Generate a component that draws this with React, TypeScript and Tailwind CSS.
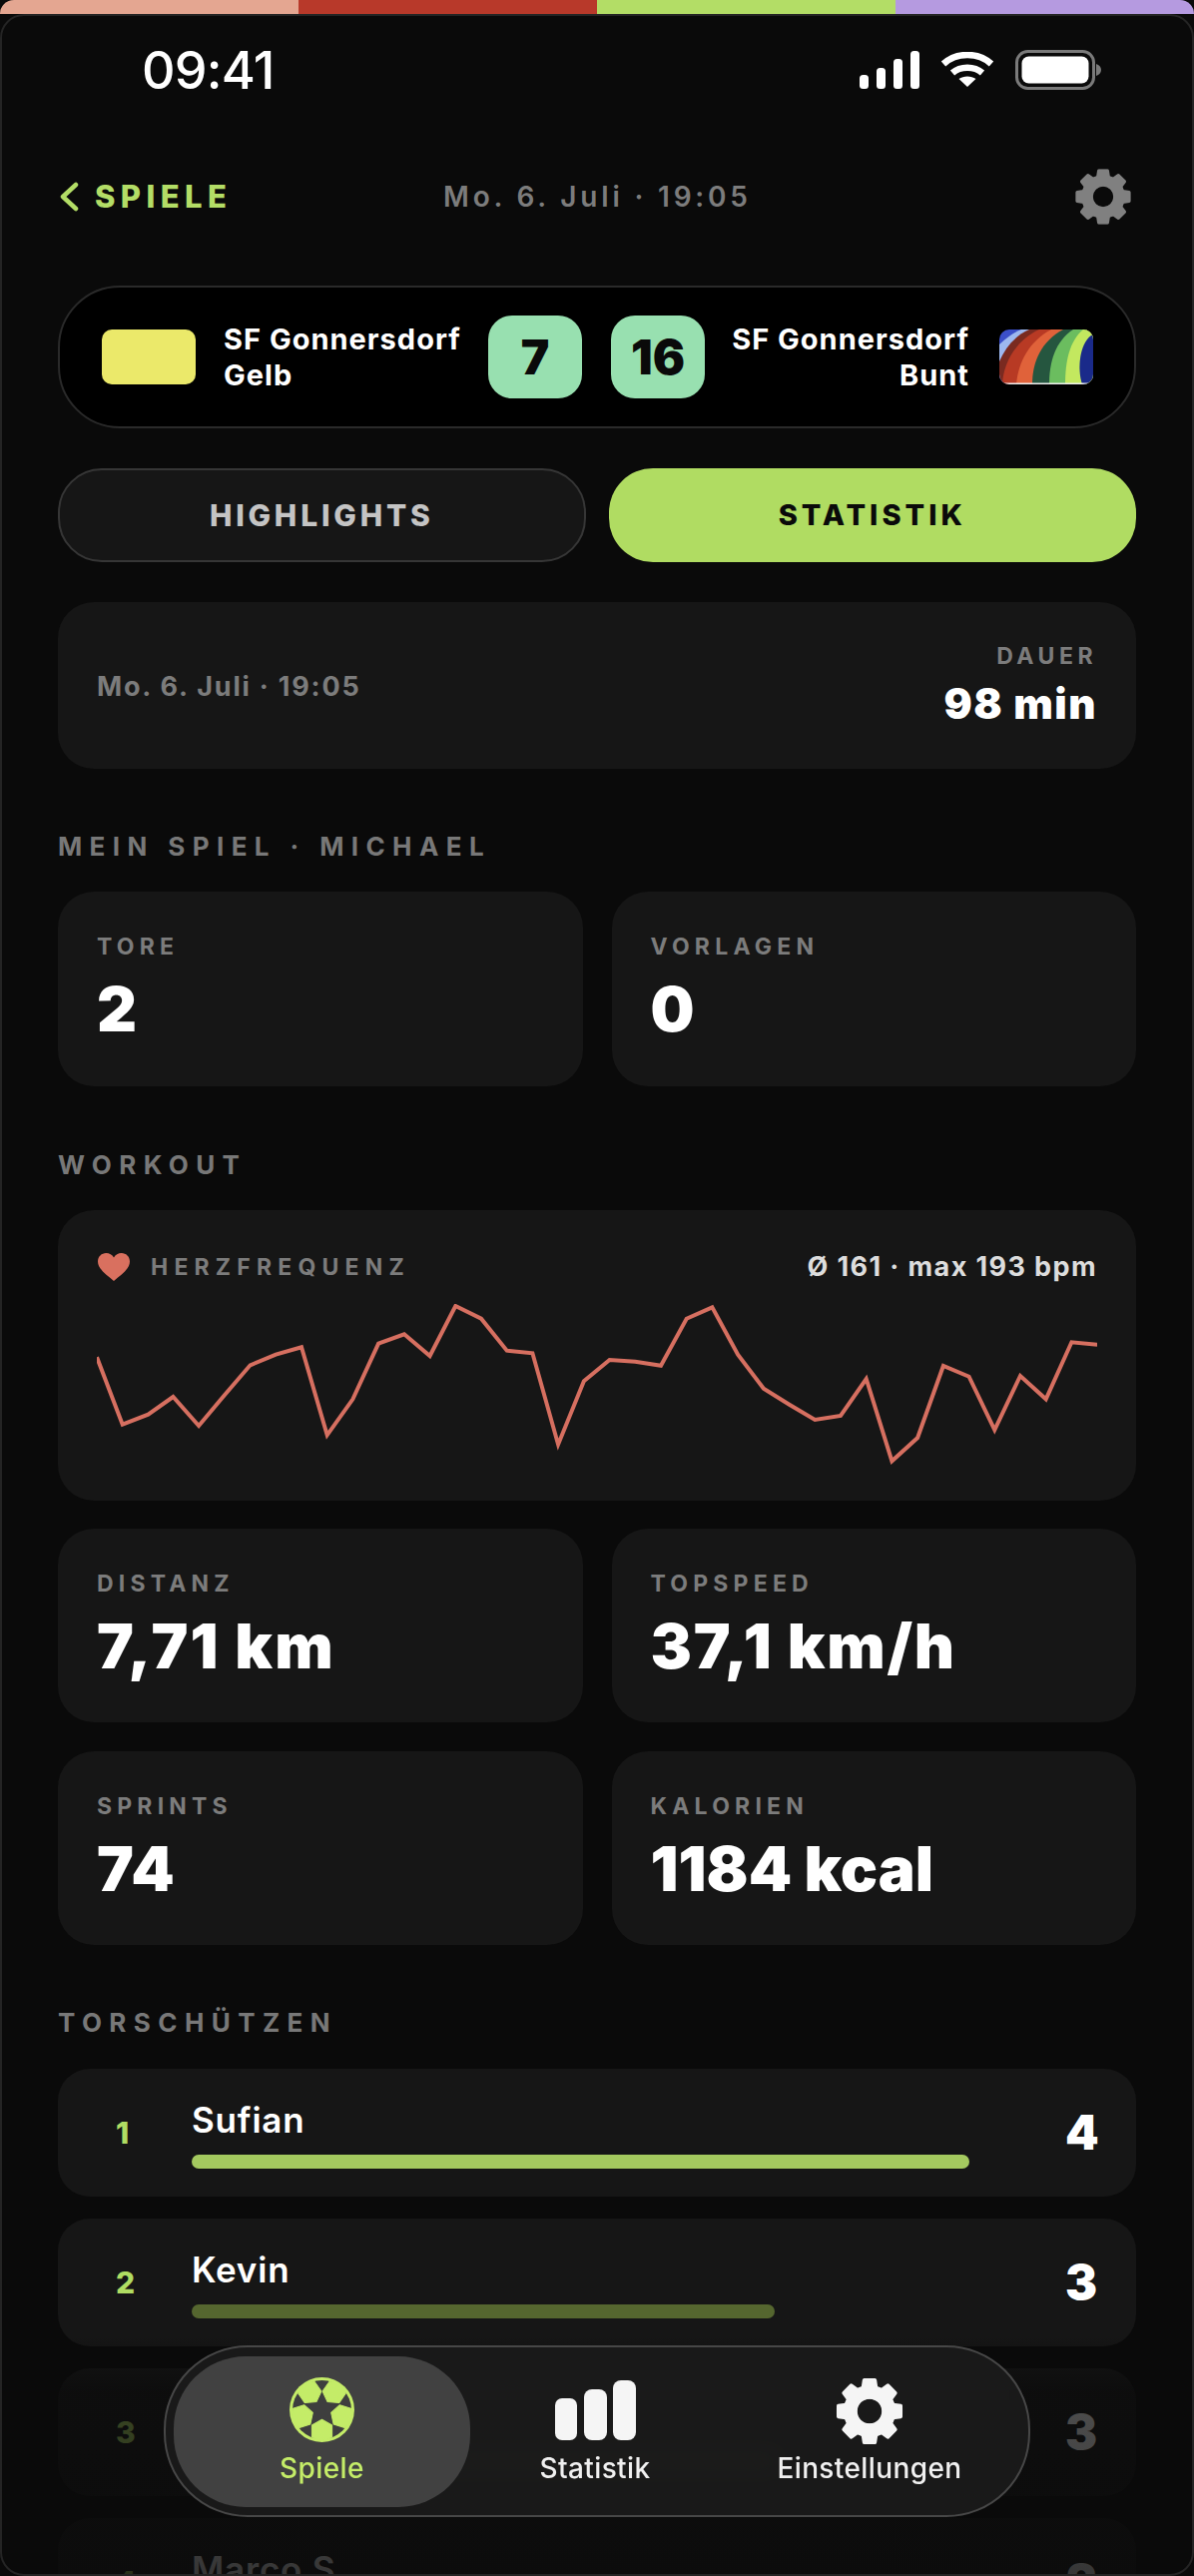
import React from "react";

const font = { fontFamily: "Inter, 'Noto Sans', sans-serif" };

function gearPath(outer: number, body: number, hole: number) {
  const c = 50;
  const teeth = 8;
  const pts: string[] = [];
  for (let i = 0; i < teeth; i++) {
    const a = (i * 2 * Math.PI) / teeth - Math.PI / 2;
    const w1 = 0.27;
    const w2 = 0.17;
    const p = (r: number, d: number) =>
      `${(c + r * Math.cos(a + d)).toFixed(2)} ${(c + r * Math.sin(a + d)).toFixed(2)}`;
    pts.push(p(body, -w1), p(outer, -w2), p(outer, w2), p(body, w1));
  }
  const ring = "M" + pts.join("L") + "Z";
  const h = `M${c - hole} ${c}a${hole} ${hole} 0 1 0 ${hole * 2} 0a${hole} ${hole} 0 1 0 ${-hole * 2} 0Z`;
  return ring + h;
}

function Gear({ className, color }: { className: string; color: string }) {
  return (
    <svg viewBox="0 0 100 100" className={className}>
      <path d={gearPath(46, 36, 17)} fill={color} fillRule="evenodd" />
      <path d={gearPath(44, 34, 20)} fill={color} fillRule="evenodd" stroke={color} strokeWidth="5" strokeLinejoin="round" />
    </svg>
  );
}

function hex(cx: number, cy: number, r: number, rot: number) {
  return Array.from({ length: 6 }, (_, i) => {
    const a = rot + (i * Math.PI) / 3;
    return `${(cx + r * Math.cos(a)).toFixed(2)},${(cy + r * Math.sin(a)).toFixed(2)}`;
  }).join(" ");
}

function Ball() {
  const angles = [-125, -55, 18, 90, 162];
  return (
    <svg viewBox="0 0 64 64" className="h-[65px] w-[65px]">
      <defs>
        <clipPath id="ballclip">
          <circle cx="32" cy="32" r="30" />
        </clipPath>
      </defs>
      <circle cx="32" cy="32" r="32" fill="#c4ec68" />
      <circle cx="32" cy="32" r="29" fill="#3e3e3e" />
      <g clipPath="url(#ballclip)" fill="#c4ec68">
        {angles.map((d) => {
          const a = (d * Math.PI) / 180;
          return (
            <polygon key={d} points={hex(32 + 21 * Math.cos(a), 32 + 21 * Math.sin(a), 11.5, a + Math.PI)} strokeLinejoin="round" stroke="#c4ec68" strokeWidth="1" />
          );
        })}
      </g>
    </svg>
  );
}

function Flag() {
  return (
    <svg viewBox="0 0 94 55" className="h-[55px] w-[94px] rounded-[10px]">
      <rect width="94" height="55" fill="#3b4fc9" />
      <path d="M0 15C8 8 14 3 22 0L94 0L94 55L0 55Z" fill="#9db8f0" />
      <path d="M0 32C6 18 16 6 30 0L94 0L94 55L0 55Z" fill="#7a2a20" />
      <path d="M3 55C4 32 18 10 40 0L94 0L94 55Z" fill="#b83a24" />
      <path d="M17 55C19 32 30 12 52 0L94 0L94 55Z" fill="#e0623a" />
      <path d="M33 55C33 32 42 12 64 0L94 0L94 55Z" fill="#25563f" />
      <path d="M50 55C50 32 56 12 74 0L94 0L94 55Z" fill="#6bbd5f" />
      <path d="M66 55C66 32 70 12 84 0L94 0L94 55Z" fill="#c3e85f" />
      <path d="M83 55C78 40 80 15 92 6L94 6L94 55Z" fill="#1a2a8a" />
      <rect y="53.5" width="94" height="1.5" fill="#eeeeee" />
    </svg>
  );
}

function Signal() {
  return (
    <svg viewBox="0 0 60 38" className="h-[38px] w-[60px]">
      <rect x="0" y="24" width="9" height="14" rx="3.5" fill="#fff" />
      <rect x="17" y="17" width="9" height="21" rx="3.5" fill="#fff" />
      <rect x="34" y="8" width="9" height="30" rx="3.5" fill="#fff" />
      <rect x="51" y="0" width="9" height="38" rx="3.5" fill="#fff" />
    </svg>
  );
}

function Wifi() {
  return (
    <svg viewBox="0 0 54 36" className="h-[36px] w-[54px]" fill="none" stroke="#fff" strokeWidth="6.5">
      <path d="M3 12C16 0 38 0 51 12" />
      <path d="M12 21C20 14 34 14 42 21" />
      <path d="M27 35L18.5 27C23 23.5 31 23.5 35.5 27Z" fill="#fff" stroke="none" />
    </svg>
  );
}

function Battery() {
  return (
    <svg viewBox="0 0 86 40" className="h-[40px] w-[86px]">
      <rect x="1.5" y="1.5" width="77" height="37" rx="11" fill="none" stroke="#7a7a7a" strokeWidth="3" />
      <rect x="6.5" y="6.5" width="67" height="27" rx="7" fill="#fff" />
      <path d="M81 14C84 15 86 17 86 20C86 23 84 25 81 26Z" fill="#7a7a7a" />
    </svg>
  );
}

const Heart = () => (
  <svg viewBox="0 0 32 28" className="h-[28px] w-[32px]">
    <path d="M16 28C9 22 0 16 0 8.5C0 3.5 3.8 0 8.3 0C11.5 0 14.4 1.7 16 4.5C17.6 1.7 20.5 0 23.7 0C28.2 0 32 3.5 32 8.5C32 16 23 22 16 28Z" fill="#d9705f" />
  </svg>
);

const raw: [number, number][] = [
  [80, 478], [116, 680], [152, 650], [187, 597], [223, 684], [259, 592], [295, 502], [331, 470], [367, 448], [403, 712],
  [439, 604], [475, 437], [511, 409], [547, 474], [583, 324], [619, 362], [655, 458], [691, 466], [727, 740], [763, 550],
  [799, 486], [835, 491], [871, 503], [907, 362], [943, 328], [979, 470], [1015, 572], [1051, 620], [1087, 666], [1123, 654],
  [1159, 543], [1195, 790], [1231, 720], [1267, 504], [1303, 536], [1339, 696], [1375, 534], [1411, 604], [1447, 433], [1483, 440],
];
const linePoints = raw.map(([x, y]) => `${((x - 80) / 1.4).toFixed(1)},${(y / 3 - 106).toFixed(1)}`).join(" ");

function SectionTitle({ children, className }: { children: React.ReactNode; className: string }) {
  return (
    <div className={`h-[32px] text-[26px] leading-[32px] font-bold tracking-[7.4px] text-[#787878] ${className}`}>{children}</div>
  );
}

function Stat({ label, value, track = "tracking-[1px]" }: { label: string; value: string; track?: string }) {
  return (
    <div className="h-full rounded-[36px] bg-[#161616] px-[39px] pt-[39px]">
      <div className="text-[23px] leading-[32px] font-bold tracking-[5.2px] text-[#7c7c7c]">{label}</div>
      <div className={`mt-[14px] text-[62px] leading-[66px] font-black text-white ${track}`}>{value}</div>
    </div>
  );
}

function Scorer({ rank, name, goals, pct, bar }: { rank: string; name: string; goals: string; pct: number; bar: string }) {
  return (
    <div className="flex h-[128px] shrink-0 items-center rounded-[32px] bg-[#161616] pl-[58px] pr-[39px]">
      <div className="w-[76px] text-[30px] font-extrabold text-[#b0dd63]">{rank}</div>
      <div className="flex-1 pr-[96px]">
        <div className="mt-[2px] text-[35px] leading-[40px] font-semibold tracking-[0.8px] text-white">{name}</div>
        <div className="mt-[15px] h-[14px] rounded-full" style={{ width: `${pct}%`, backgroundColor: bar }} />
      </div>
      <div className="w-[32px] text-right text-[48px] font-black text-white">{goals}</div>
    </div>
  );
}

export default function App() {
  return (
    <div className="relative h-[2580px] w-[1196px] overflow-hidden bg-[#0a0a0a]" style={font}>
      <div className="flex h-[14px] overflow-hidden rounded-t-[22px]">
        <div className="flex-1 bg-[#e4a691]" />
        <div className="flex-1 bg-[#b8392a]" />
        <div className="flex-1 bg-[#b3dd66]" />
        <div className="flex-1 bg-[#b59ae0]" />
      </div>

      <div className="mt-[26px] flex h-[60px] items-center pl-[142px] pr-[93px]">
        <div className="mt-[2px] text-[52px] font-medium tracking-[-0.8px] text-white">09:41</div>
        <div className="ml-auto flex items-center gap-[21px]">
          <Signal />
          <Wifi />
          <Battery />
        </div>
      </div>

      <div className="relative mt-[67px] flex h-[60px] items-center px-[59px]">
        <svg viewBox="0 0 20 30" className="h-[30px] w-[20px]" fill="none" stroke="#b3dd66" strokeWidth="4.5" strokeLinecap="round" strokeLinejoin="round">
          <path d="M17 3L4 15L17 27" />
        </svg>
        <div className="ml-[16px] text-[31px] font-extrabold tracking-[5.4px] text-[#b3dd66]">SPIELE</div>
        <div className="absolute left-[444px] text-[28px] font-semibold tracking-[3.8px] text-[#7c7c7c]">Mo. 6. Juli · 19:05</div>
        <Gear className="ml-auto mr-[2px] h-[60px] w-[60px]" color="#808080" />
      </div>

      <div className="mx-[58px] mt-[59px] flex h-[143px] items-center rounded-[62px] border-2 border-[#2a2a2a] bg-black pl-[42px] pr-[41px]">
        <div className="h-[55px] w-[94px] shrink-0 rounded-[10px] bg-[#ebe96a]" />
        <div className="ml-[28px] w-[265px] shrink-0 text-[29px] leading-[36px] font-bold tracking-[1px] whitespace-nowrap text-white">
          SF Gonnersdorf
          <br />
          Gelb
        </div>
        <div className="flex h-[83px] w-[94px] shrink-0 items-center justify-center rounded-[24px] bg-[#98e0b0] text-[48px] font-black text-[#0a0a0a]">7</div>
        <div className="ml-[29px] flex h-[83px] w-[94px] shrink-0 items-center justify-center rounded-[24px] bg-[#98e0b0] text-[48px] font-black text-[#0a0a0a]">16</div>
        <div className="flex-1 text-right text-[29px] leading-[36px] font-bold tracking-[1px] whitespace-nowrap text-white">
          SF Gonnersdorf
          <br />
          Bunt
        </div>
        <div className="ml-[30px] shrink-0">
          <Flag />
        </div>
      </div>

      <div className="mx-[58px] mt-[40px] grid h-[94px] grid-cols-2 gap-[23px]">
        <div className="flex items-center justify-center rounded-[44px] border-2 border-[#363636] bg-[#161616] text-[30px] font-extrabold tracking-[3.8px] text-[#c4c4c4]">HIGHLIGHTS</div>
        <div className="flex items-center justify-center rounded-[44px] bg-[#b0dc62] text-[29px] font-extrabold tracking-[4px] text-[#0a0a0a]">STATISTIK</div>
      </div>

      <div className="mx-[58px] mt-[40px] flex h-[167px] items-start justify-between rounded-[36px] bg-[#161616] px-[39px] pt-[38px]">
        <div className="mt-[29px] text-[27px] leading-[36px] font-bold tracking-[1.8px] text-[#7c7c7c]">Mo. 6. Juli · 19:05</div>
        <div className="text-right">
          <div className="text-[23px] leading-[32px] font-bold tracking-[4.5px] text-[#7c7c7c]">DAUER</div>
          <div className="mt-[8px] text-[42px] leading-[48px] font-black tracking-[1.5px] text-white">98 min</div>
        </div>
      </div>

      <SectionTitle className="ml-[58px] mt-[62px]">MEIN SPIEL · MICHAEL</SectionTitle>
      <div className="mx-[58px] mt-[29px] grid h-[195px] grid-cols-2 gap-[29px]">
        <Stat label="TORE" value="2" />
        <Stat label="VORLAGEN" value="0" />
      </div>

      <SectionTitle className="ml-[58px] mt-[63px]">WORKOUT</SectionTitle>
      <div className="mx-[58px] mt-[29px] h-[291px] rounded-[36px] bg-[#161616] px-[39px] pt-[40px]">
        <div className="flex h-[34px] items-center">
          <div className="ml-[1px]">
            <Heart />
          </div>
          <div className="ml-[21px] text-[23px] font-bold tracking-[6.2px] text-[#7c7c7c]">HERZFREQUENZ</div>
          <div className="ml-auto text-[27px] font-bold tracking-[1.4px] text-[#dddddd]">Ø 161 · max 193 bpm</div>
        </div>
        <svg viewBox="0 0 1002 170" className="mt-[20px] h-[170px] w-[1002px]" fill="none" stroke="#d66f60" strokeWidth="4" strokeLinejoin="miter">
          <polyline points={linePoints} />
        </svg>
      </div>

      <div className="mx-[58px] mt-[28px] grid grid-cols-2 grid-rows-[194px_194px] gap-[29px]">
        <Stat label="DISTANZ" value="7,71 km" track="tracking-[2.2px]" />
        <Stat label="TOPSPEED" value="37,1 km/h" track="tracking-[1.8px]" />
        <Stat label="SPRINTS" value="74" />
        <Stat label="KALORIEN" value="1184 kcal" track="tracking-[0px]" />
      </div>

      <SectionTitle className="ml-[58px] mt-[62px]">TORSCHÜTZEN</SectionTitle>
      <div className="mx-[58px] mt-[30px] flex flex-col gap-[22px]">
        <Scorer rank="1" name="Sufian" goals="4" pct={100} bar="#a4c95f" />
        <Scorer rank="2" name="Kevin" goals="3" pct={75} bar="#55662f" />
        <Scorer rank="3" name="Niklas" goals="3" pct={75} bar="#55662f" />
        <Scorer rank="4" name="Marco S." goals="2" pct={50} bar="#55662f" />
      </div>

      <div className="pointer-events-none absolute inset-x-0 bottom-0 h-[240px] bg-[linear-gradient(to_bottom,rgba(10,10,10,0)_0%,rgba(10,10,10,0.72)_22%,rgba(10,10,10,0.82)_100%)]" />

      <div className="absolute left-[164px] top-[2349px] flex h-[172px] w-[868px] items-center rounded-[84px] border-2 border-[#474747] bg-[#1c1c1c]/85 pl-[8px] backdrop-blur-sm">
        <div className="flex h-[151px] w-[297px] flex-col items-center rounded-[72px] bg-[#434343]/95 pt-[21px]">
          <Ball />
          <div className="mt-[8px] text-[28px] leading-[36px] font-medium tracking-[0.4px] text-[#c4ec68]">Spiele</div>
        </div>
        <div className="flex h-[151px] w-[250px] flex-col items-center pt-[24px]">
          <svg viewBox="0 0 81 60" className="h-[60px] w-[81px]">
            <rect x="0" y="18" width="22" height="42" rx="7" fill="#f5f5f5" />
            <rect x="29" y="9" width="23" height="51" rx="8" fill="#f5f5f5" />
            <rect x="58" y="0" width="23" height="60" rx="8" fill="#f5f5f5" />
          </svg>
          <div className="mt-[10px] text-[28px] leading-[36px] font-medium tracking-[0.4px] text-[#f0f0f0]">Statistik</div>
        </div>
        <div className="flex h-[151px] w-[300px] flex-col items-center pt-[19px]">
          <Gear className="h-[72px] w-[72px]" color="#f5f5f5" />
          <div className="mt-[3px] text-[28px] leading-[36px] font-medium tracking-[0.4px] text-[#f0f0f0]">Einstellungen</div>
        </div>
      </div>

      <div className="pointer-events-none absolute inset-x-0 bottom-0 top-[14px] rounded-[24px] border-2 border-[#242424]" />
    </div>
  );
}
